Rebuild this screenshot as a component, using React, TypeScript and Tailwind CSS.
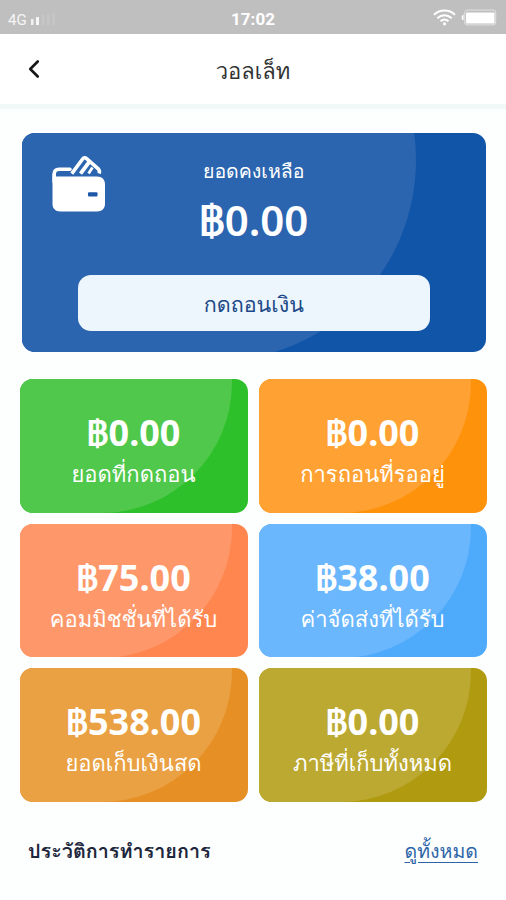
import { ChevronLeft } from "lucide-react";

const STATS = [
  { amount: "฿0.00", label: "ยอดที่กดถอน", bg: "bg-[#2dc02b]", glow: "bg-[#50c84b]" },
  { amount: "฿0.00", label: "การถอนที่รออยู่", bg: "bg-[#ff920b]", glow: "bg-[#ffa233]" },
  { amount: "฿75.00", label: "คอมมิชชั่นที่ได้รับ", bg: "bg-[#ff864f]", glow: "bg-[#fe986b]" },
  { amount: "฿38.00", label: "ค่าจัดส่งที่ได้รับ", bg: "bg-[#4eaafb]", glow: "bg-[#6ab7fe]" },
  { amount: "฿538.00", label: "ยอดเก็บเงินสด", bg: "bg-[#e68f24]", glow: "bg-[#eaa143]" },
  { amount: "฿0.00", label: "ภาษีที่เก็บทั้งหมด", bg: "bg-[#b09a10]", glow: "bg-[#bca932]" },
];

function StatusBar() {
  return (
    <div className="flex h-[34px] items-center justify-between bg-[#bfbfbf] px-2 text-white">
      <div className="flex w-[80px] items-center gap-[3px] pt-1.5">
        <span className="font-[Roboto] text-[15px] leading-none opacity-85">4G</span>
        <svg width="28" height="14" viewBox="0 0 28 14" fill="currentColor">
          <rect x="1" y="6" width="2.5" height="6" opacity="0.8" />
          <rect x="6" y="4" width="3" height="8" opacity="0.85" />
          <rect x="12" y="2" width="2.5" height="10" opacity="0.12" />
          <rect x="17" y="1" width="2.5" height="11" opacity="0.12" />
          <rect x="22.5" y="0" width="2.5" height="12" opacity="0.12" />
        </svg>
      </div>
      <span className="pt-1 font-[Roboto] text-[17px] leading-none font-bold">17:02</span>
      <div className="flex w-[80px] items-center justify-end gap-1">
        <svg width="23" height="17" viewBox="0 0 23 17" fill="none" stroke="currentColor" strokeWidth="2">
          <path d="M1 5.8C7 .2 16 .2 22 5.8M4.3 9.2c4.2-3.8 10.2-3.8 14.4 0M7.5 12.3c2.4-2.2 5.6-2.2 8 0" />
          <circle cx="11.5" cy="14.8" r="1.6" fill="currentColor" stroke="none" />
        </svg>
        <svg width="38" height="17" viewBox="0 0 38 17">
          <rect x="4.7" y="1.2" width="31" height="14.6" rx="3" fill="none" stroke="white" strokeWidth="1.2" opacity="0.45" />
          <rect x="6" y="3.5" width="28.5" height="11" rx="1" fill="white" />
          <path d="M3.5 5.5C1 6 1 11 3.5 11.5z" fill="white" />
        </svg>
      </div>
    </div>
  );
}

function WalletIcon() {
  return (
    <svg width="54" height="58" viewBox="0 0 54 58" fill="none">
      <path d="M18 14.2H7C4 14.2 2.2 16 2.2 19v8" stroke="#fff" strokeWidth="3.6" strokeLinecap="round" />
      <path
        d="M.5 18.5C1.5 21 4 21.6 6.5 21.6H45c5 0 8 3 8 7.7v19.5c0 4.8-3 7.7-8 7.7H8.3c-5 0-7.8-3-7.8-7.7z"
        fill="#fff"
      />
      <path
        d="M19.8 18.6 30.6 4c1.2-1.5 2.6-1.6 4-.4L46 13.6c1.5 1.3 1.8 2.8 1.2 4.8"
        stroke="#fff"
        strokeWidth="3.6"
      />
      <path d="M28.5 18.6 37.2 7" stroke="#fff" strokeWidth="3.8" />
      <path d="M36.6 18.6 40.4 12.6" stroke="#fff" strokeWidth="2.8" />
      <rect x="36" y="37.2" width="9.5" height="4.2" rx="1" fill="#1d57a8" />
    </svg>
  );
}

function StatCard({ stat }: { stat: (typeof STATS)[number] }) {
  return (
    <div className={`relative h-[133.5px] overflow-hidden rounded-[13px] ${stat.bg}`}>
      <div className={`absolute inset-y-0 left-0 w-[82px] ${stat.glow}`} />
      <div className={`absolute top-[-127px] left-[-49px] size-[261px] rounded-full ${stat.glow}`} />
      <div className="relative flex flex-col items-center pt-[33px] text-white">
        <span className="text-[36px] leading-[42px] font-bold">{stat.amount}</span>
        <span className="mt-0.5 text-[22px] leading-[34px] whitespace-nowrap">{stat.label}</span>
      </div>
    </div>
  );
}

export default function App() {
  return (
    <div className="h-[900px] w-[506px] overflow-hidden bg-[#fdfefe] font-['Noto_Sans',Loma,sans-serif]">
      <StatusBar />
      <header className="grid h-[70px] grid-cols-[68px_1fr_68px] items-center bg-white">
        <ChevronLeft className="ml-[19px] size-[30px] text-[#171717]" strokeWidth={2.1} />
        <h1 className="pt-0.5 text-center text-[22px] leading-[34px] text-[#333]">วอลเล็ท</h1>
      </header>
      <div className="h-[5px] bg-[#f1f8f8]" />

      <main className="pt-6">
        <section className="relative mr-5 ml-[21.5px] h-[219px] overflow-hidden rounded-[13px] bg-[#1155a9]">
          <div className="absolute top-[-174px] left-[-8px] size-[402px] rounded-full bg-[#2b65b0]" />
          <div className="absolute inset-y-0 left-0 w-[193px] bg-[#2b65b0]" />
          <div className="relative grid grid-cols-[84px_1fr_84px] pt-[22px]">
            <div className="pl-[30px]">
              <WalletIcon />
            </div>
            <div className="flex flex-col items-center text-white">
              <span className="text-[19.5px] leading-8 whitespace-nowrap">ยอดคงเหลือ</span>
              <span className="mt-1 text-[42px] leading-[58px] font-semibold">฿0.00</span>
            </div>
          </div>
          <button className="relative mx-auto mt-[26px] flex h-[56px] w-[352px] items-center justify-center rounded-[13px] bg-[#edf6fc] pt-0.5 text-[21.5px] text-[#1d4987]">
            กดถอนเงิน
          </button>
        </section>

        <section className="mx-auto mt-[27px] grid w-[467px] grid-cols-2 gap-[11px]">
          {STATS.map((stat) => (
            <StatCard key={stat.label} stat={stat} />
          ))}
        </section>

        <div className="flex items-center justify-between px-7 pt-[31px]">
          <h2 className="text-[19.8px] leading-9 font-semibold text-[#20263b]">ประวัติการทำรายการ</h2>
          <a className="text-[19.5px] leading-9 text-[#2d65a8] underline underline-offset-4">ดูทั้งหมด</a>
        </div>
      </main>
    </div>
  );
}
